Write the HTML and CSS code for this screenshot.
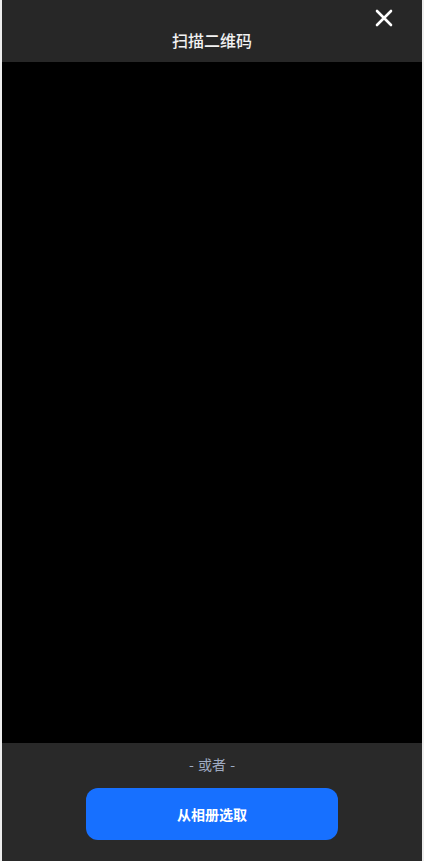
FILE: index.html
```html
<!DOCTYPE html>
<html lang="zh">
<head>
<meta charset="utf-8">
<link rel="stylesheet" href="styles.css">
</head>
<body>
<div class="app">
  <header class="top">
    <h1 class="title">扫描二维码</h1>
    <button class="close" aria-label="关闭">
      <svg width="18" height="18" viewBox="0 0 18 18"><path d="M2 2L16 16M16 2L2 16" stroke="#fff" stroke-width="2.6" stroke-linecap="round"/></svg>
    </button>
  </header>
  <main class="camera"></main>
  <footer class="bottom">
    <div class="or">- 或者 -</div>
    <button class="pick">从相册选取</button>
  </footer>
</div>
</body>
</html>
```
FILE: styles.css
```css
html, body {
  margin: 0;
  height: 100%;
  background: #ededed;
}
body {
  font-family: "Noto Sans CJK SC", "Noto Sans", sans-serif;
}
.app {
  margin: 0 2px;
  height: 100%;
  display: flex;
  flex-direction: column;
}
.top {
  position: relative;
  height: 62px;
  background: #272727;
  display: flex;
  align-items: flex-end;
  justify-content: center;
}
.title {
  margin: 0 0 12px;
  color: #f2f2f2;
  font-size: 16px;
  font-weight: 500;
  line-height: 20px;
}
.close {
  position: absolute;
  top: 9px;
  right: 29px;
  padding: 0;
  border: 0;
  background: none;
  width: 18px;
  height: 18px;
  display: flex;
}
.camera {
  flex: 1;
  background: #000;
}
.bottom {
  height: 118px;
  background: #292929;
  display: flex;
  flex-direction: column;
  align-items: center;
}
.or {
  margin-top: 11px;
  color: #9fabc2;
  font-size: 14px;
  line-height: 20px;
  word-spacing: 1px;
}
.pick {
  margin-top: 14px;
  width: 252px;
  height: 52px;
  border: 0;
  border-radius: 12px;
  background: #1770ff;
  color: #fff;
  font-family: "Noto Sans CJK SC", "Noto Sans", sans-serif;
  font-size: 14px;
  font-weight: 700;
}
```
